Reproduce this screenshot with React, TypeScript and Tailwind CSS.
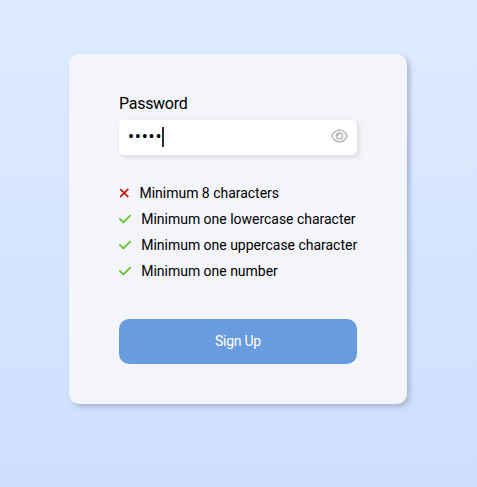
import { FaCheck, FaXmark, FaRegEye } from "react-icons/fa6";

const rules = [
  { label: "Minimum 8 characters", met: false },
  { label: "Minimum one lowercase character", met: true },
  { label: "Minimum one uppercase character", met: true },
  { label: "Minimum one number", met: true },
];

export default function App() {
  return (
    <main className="flex h-screen w-full items-start justify-center bg-linear-to-b from-[#deebff] to-[#cedefe] pt-[54px] font-['Roboto',sans-serif] text-black">
      <form className="mr-px flex h-[350px] w-[338px] flex-col rounded-[10px] bg-[#f3f5fa] px-[50px] pt-10 shadow-[3px_3px_5px_#a9b8d0]">
        <label className="h-[26px] text-base leading-[20px] tracking-[-0.28px]">Password</label>
        <div className="flex h-[35px] items-center justify-between rounded-[5px] bg-white pr-[9px] pl-[9px] shadow-[2px_2px_5px_#d7d9e0]">
          <div className="flex items-center pb-[2px]">
            <span className="w-[34px] text-[18px] leading-[20px] tracking-[0.8px]">•••••</span>
            <span className="h-5 w-[2px] bg-[#303135]" />
          </div>
          <FaRegEye className="h-4 w-[17px] -translate-y-[2px] stroke-[#b9b9b9] stroke-[6] text-[#b9b9b9]" />
        </div>
        <ul className="mt-[25px] flex flex-col text-[14px] leading-[26px] tracking-[-0.02px]">
          {rules.map((rule) => (
            <li key={rule.label} className="flex h-[26px] items-center gap-[10px] whitespace-nowrap">
              {rule.met ? (
                <FaCheck className="h-[14px] w-[12.25px] shrink-0 text-[#50c41c]" />
              ) : (
                <FaXmark className="h-[14px] w-[10.5px] shrink-0 stroke-[#bd1e10] stroke-[6] text-[#bd1e10]" />
              )}
              <span>{rule.label}</span>
            </li>
          ))}
        </ul>
        <button type="button" className="mt-[35px] h-[45px] rounded-[10px] bg-[#699cdf] text-[14px] tracking-[-0.25px] text-white">
          Sign Up
        </button>
      </form>
    </main>
  );
}
